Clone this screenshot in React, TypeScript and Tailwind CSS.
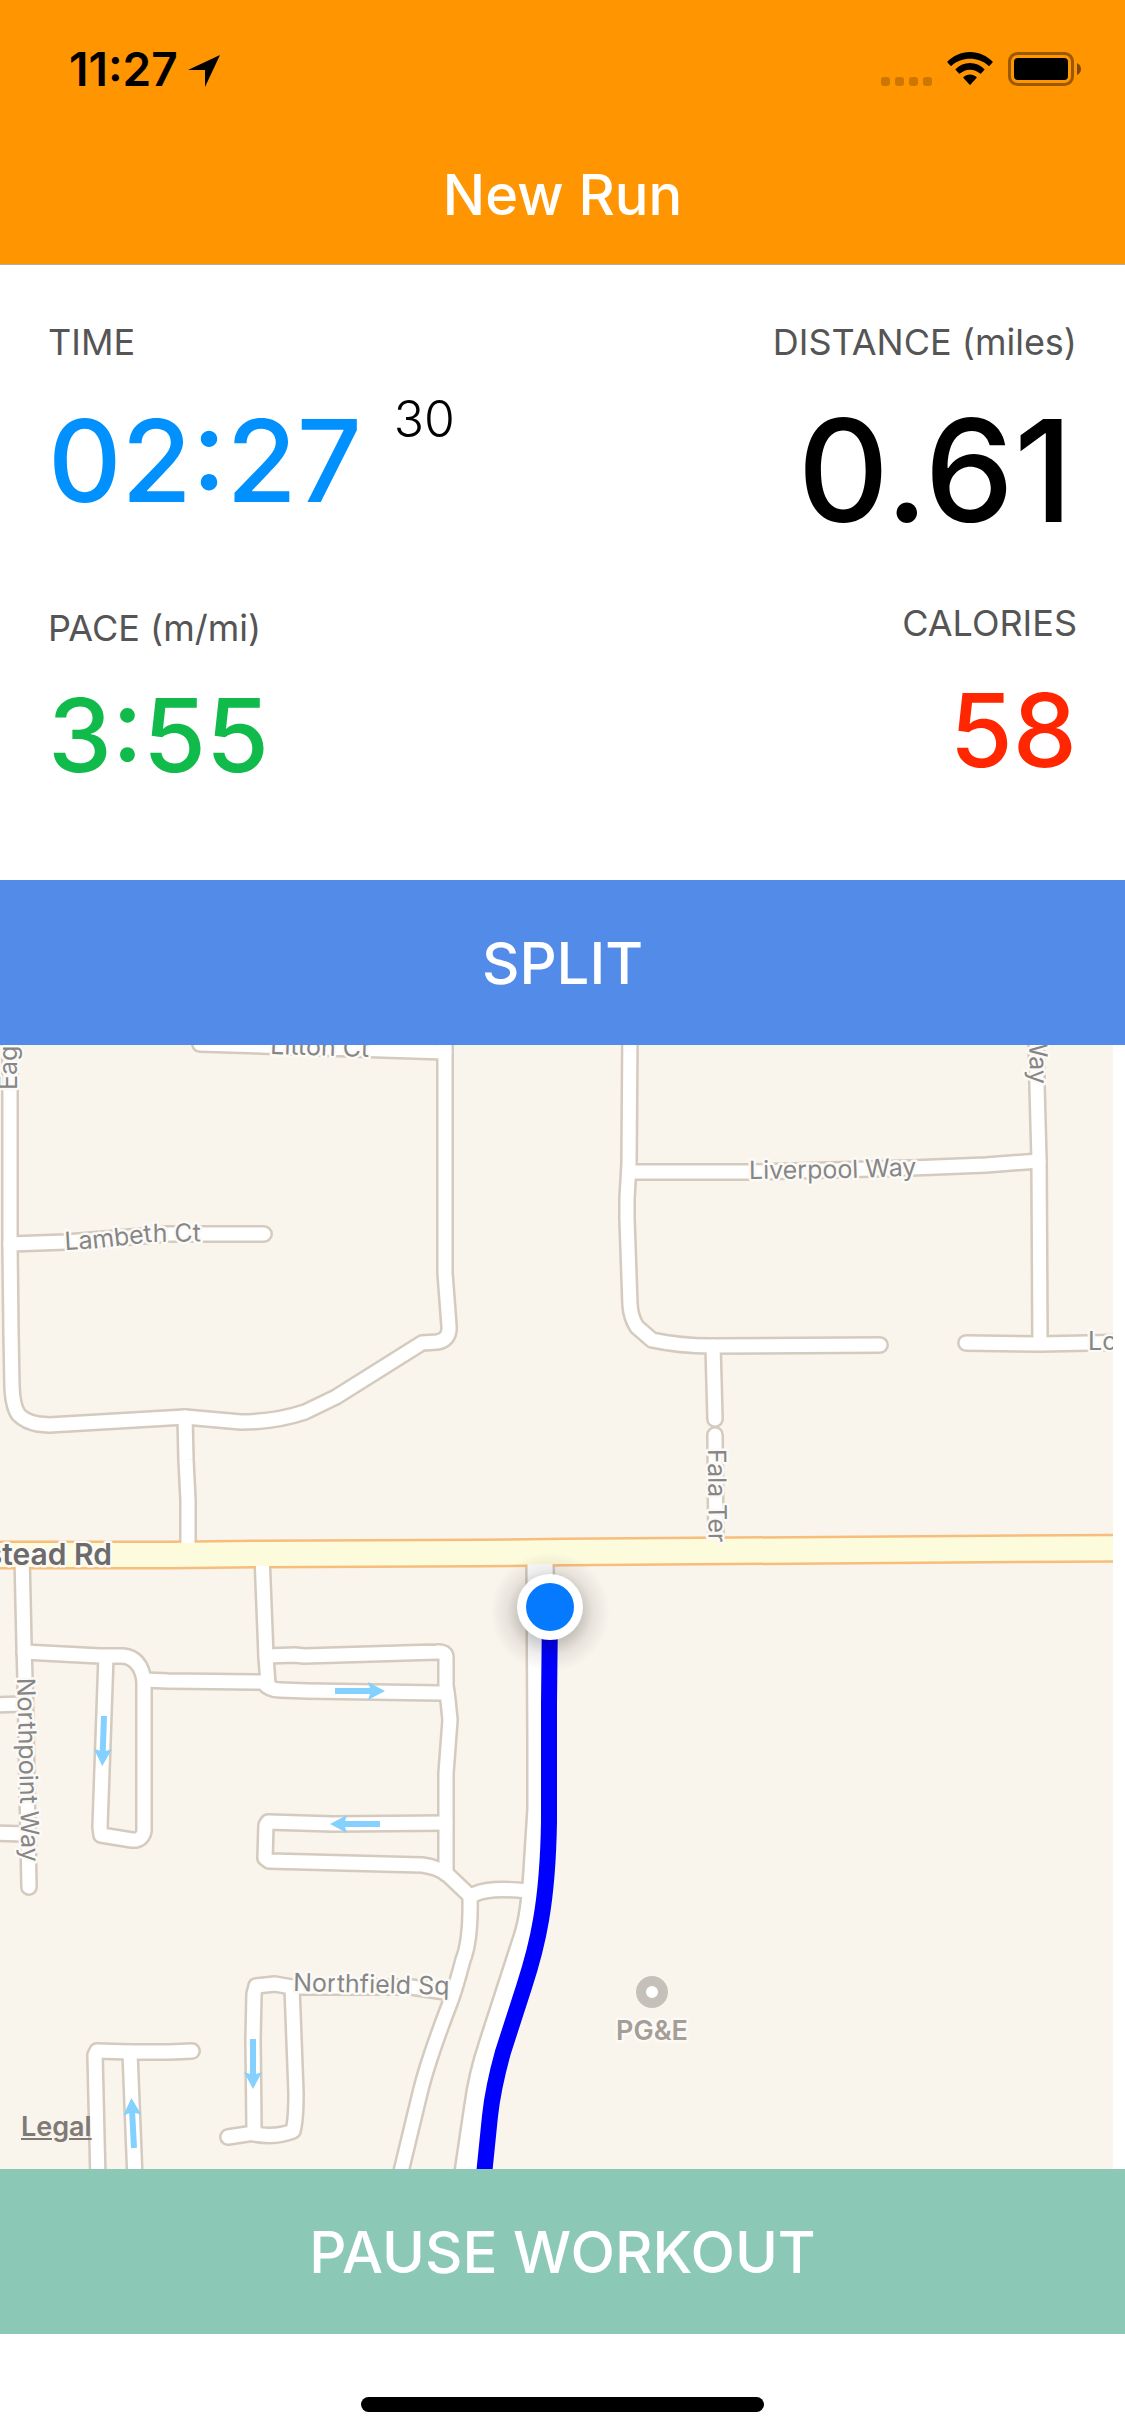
type Point = [number, number];

const minorRoads = [
  "M10,1030 L10,1245 L11,1333 L12,1387 Q13,1408 19,1415 Q26,1422 38,1424 L49,1425 L185,1417 L241,1422 Q275,1422 305,1412 L336,1397 L422,1343 L437,1342 Q450,1340 449,1326 L445,1273 L445,1030",
  "M200,1044 L445,1052",
  "M10,1244 L66,1242 L168,1234 L264,1234",
  "M185,1417 L186,1460 L188,1500 L188,1553",
  "M630,1030 L629,1164 L627,1198 L627,1219 L630,1305 Q631,1318 637,1327 L652,1340 Q680,1346 711,1346 L880,1345",
  "M629,1172 L750,1172 L911,1168 L986,1165 L1039,1161",
  "M1036,1030 L1037,1085 L1039,1160 L1040,1343",
  "M966,1343 L1040,1344 L1130,1342",
  "M713,1346 L715,1419",
  "M715,1435 L716,1548",
  "M22,1555 L24,1645 L25,1680 L29,1887",
  "M-10,1705 L22,1704",
  "M-10,1833 L24,1834",
  "M24,1652 L100,1656 L123,1656 Q141,1658 144,1681 L144,1831 Q142,1841 132,1840 L101,1835 L100,1827 L106,1656",
  "M144,1680 L168,1681 L263,1682 Q269,1690 280,1690 L307,1691 L440,1693 L447,1693",
  "M262,1555 L266,1657 L268,1684",
  "M266,1656 L295,1655 L304,1656 L437,1652 Q446,1651 446,1658 L446,1685 L448,1700 L450,1720 L446,1773 L446,1874",
  "M446,1823 L333,1824 L268,1822 L266,1825 L265,1858 L269,1861 L422,1865 Q438,1867 448,1875 L470,1896",
  "M470,1896 L475,1894 Q490,1887 528,1891",
  "M470,1896 Q471,1940 463,1960 Q455,1990 450,2003 Q428,2060 420,2093 L399,2180",
  "M228,2137 L254,2133 L254,2127 L253,2040 L254,1994 L256,1986 L275,1984 L292,1987 L411,1987 L452,1993",
  "M254,2134 Q276,2138 293,2131 Q296,2120 296,2093 L292,1987",
  "M98,2180 L95,2055 L97,2051 L130,2052 L170,2052 L192,2051",
  "M130,2052 L135,2180",
];

const trunkRoad =
  "M540,1555 L541,1740 L541,1809 L537,1872 Q534,1918 527,1938 L492,2046 Q482,2076 478,2106 L467,2180";

const highway = "M-20,1555 L170,1555 L260,1554 L480,1553 L565,1552 L1140,1548";

const route =
  "M550,1610 L549,1703 L549,1822 Q548,1880 541,1920 Q536,1950 524,1987 L503,2052 Q493,2088 490,2116 L483,2185";

const streetLabels = [
  { id: "litton", d: "M270,1054 L400,1058", text: "Litton Ct" },
  { id: "eagle", d: "M17,1090 L17,1000", text: "Eag" },
  { id: "lambeth", d: "M65,1250 L100,1248 L150,1242 L240,1241", text: "Lambeth Ct" },
  { id: "liverpool", d: "M749,1179 L850,1178 L960,1174", text: "Liverpool Way" },
  { id: "way", d: "M1029,1033 L1031,1140", text: "Way" },
  { id: "lo", d: "M1088,1350 L1160,1350", text: "Lo" },
  { id: "fala", d: "M708,1449 L709,1600", text: "Fala Ter" },
  { id: "northpoint", d: "M17,1678 L23,1910", text: "Northpoint Way" },
  { id: "northfield", d: "M293,1991 L380,1993 L500,1996", text: "Northfield Sq" },
];

const arrows: { at: Point; angle: number }[] = [
  { at: [335, 1691], angle: 0 },
  { at: [380, 1824], angle: 180 },
  { at: [104, 1716], angle: 92 },
  { at: [253, 2039], angle: 90 },
  { at: [134, 2148], angle: -93 },
];

function RouteMap() {
  return (
    <svg
      viewBox="0 1045 1113 1124"
      preserveAspectRatio="xMidYMid slice"
      className="absolute inset-0 h-full w-full"
      role="img"
      aria-label="Map of the current run"
    >
      <defs>
        <radialGradient id="dotShadow">
          <stop offset="50%" stopColor="#000" stopOpacity="0.2" />
          <stop offset="72%" stopColor="#000" stopOpacity="0.07" />
          <stop offset="100%" stopColor="#000" stopOpacity="0" />
        </radialGradient>
        {streetLabels.map((label) => (
          <path key={label.id} id={label.id} d={label.d} />
        ))}
      </defs>
      <rect x="-500" y="545" width="2113" height="2124" fill="#f9f4ec" />

      <g fill="none" strokeLinecap="round" strokeLinejoin="round">
        <g stroke="#d4cabe">
          {minorRoads.map((d) => (
            <path key={d} d={d} strokeWidth="18" />
          ))}
          <path d={trunkRoad} strokeWidth="30" strokeLinecap="butt" />
        </g>
        <path d={highway} stroke="#f7bd7c" strokeWidth="29" />
        <g stroke="#fff">
          {minorRoads.map((d) => (
            <path key={d} d={d} strokeWidth="13" />
          ))}
          <path d={trunkRoad} strokeWidth="25" strokeLinecap="butt" />
        </g>
        <path d={highway} stroke="#fcfbdb" strokeWidth="24" />
      </g>

      {arrows.map(({ at, angle }) => (
        <path
          key={at.join()}
          d="M0,-3 H35 L33,-9 L50,0 L33,9 L35,3 H0 Z"
          fill="#84d0ff"
          transform={`translate(${at[0]} ${at[1]}) rotate(${angle})`}
        />
      ))}

      <g
        fontSize="25"
        fill="#868686"
        stroke="#fcfaf6"
        strokeWidth="5"
        strokeLinejoin="round"
        paintOrder="stroke"
      >
        {streetLabels.map((label) => (
          <text key={label.id}>
            <textPath href={`#${label.id}`}>{label.text}</textPath>
          </text>
        ))}
        <text x="112" y="1565" fontSize="30" fontWeight="600" fill="#6b6b6b" textAnchor="end">
          stead Rd
        </text>
        <text x="652" y="2040" fontSize="27" fontWeight="600" fill="#a49e97" textAnchor="middle">
          PG&amp;E
        </text>
      </g>
      <circle cx="652" cy="1992" r="11" fill="#fff" stroke="#c5c1ba" strokeWidth="10" />

      <path d={route} fill="none" stroke="#0000ff" strokeWidth="16" />
      <circle cx="550" cy="1612" r="60" fill="url(#dotShadow)" />
      <circle cx="550" cy="1607" r="33" fill="#fff" />
      <circle cx="550" cy="1607" r="24" fill="#067aff" />
    </svg>
  );
}

function StatusBar() {
  return (
    <div className="flex h-[132px] items-center justify-between pt-[6px] pr-11 pl-[69px]">
      <div className="flex items-center gap-[10px]">
        <time className="text-[46px] leading-[54px] font-semibold text-black">11:27</time>
        <svg viewBox="0 0 32 32" className="mt-1 h-8 w-8" aria-hidden="true">
          <path d="M32,0 L17,32 L17,15 L0,15 Z" fill="#000" />
        </svg>
      </div>
      <div className="flex items-end gap-[15px]">
        <div className="flex gap-[5px]">
          {[0, 1, 2, 3].map((dot) => (
            <span key={dot} className="size-[9px] rounded-[3px] bg-black/20" />
          ))}
        </div>
        <svg viewBox="0 0 46 34" className="h-[34px] w-[46px]" aria-label="Wi-Fi">
          <path d="M23,0 C32,0 40,4 45.500,9.500 Q46,10 45.500,10.500 L42.500,13.700 Q42,14.200 41.500,13.700 C36,9 30,6.800 23,6.800 C16,6.800 10,9 4.500,13.700 Q4,14.200 3.500,13.700 L0.500,10.500 Q0,10 0.500,9.500 C6,4 14,0 23,0 Z" />
          <path d="M23,11 C28.500,11 33.500,13.300 37.300,17 Q37.800,17.500 37.300,18 L34,21.600 Q33.500,22.100 33,21.600 C30,19.200 27,17.800 23,17.800 C19,17.800 16,19.200 13,21.600 Q12.500,22.100 12,21.600 L8.700,18 Q8.200,17.500 8.700,17 C12.500,13.300 17.500,11 23,11 Z" />
          <path d="M23,22.500 C25.500,22.500 27.700,23.400 29.500,25 Q30,25.500 29.500,26 L23.600,32.600 Q23,33.200 22.400,32.600 L16.500,26 Q16,25.500 16.500,25 C18.300,23.400 20.500,22.500 23,22.500 Z" />
        </svg>
        <svg viewBox="0 0 73 34" className="h-[34px] w-[73px]" aria-label="Battery full">
          <rect x="1.500" y="1.500" width="63" height="31" rx="8" fill="none" stroke="#000" strokeOpacity="0.4" strokeWidth="3" />
          <rect x="6" y="6" width="54" height="22" rx="4" />
          <path d="M69,11 Q73,13 73,17 Q73,21 69,23 Z" fillOpacity="0.5" />
        </svg>
      </div>
    </div>
  );
}

const labelClass = "text-[36px] leading-[46px] text-[#555]";

export default function App() {
  return (
    <div className="flex min-h-screen flex-col bg-white font-['Inter',sans-serif]">
      <header className="border-b border-[#b2ada6] bg-[#ff9500]">
        <StatusBar />
        <h1 className="pt-[27px] pb-[33px] text-center text-[56px] leading-[72px] font-medium text-white">New Run</h1>
      </header>

      <main className="flex flex-1 flex-col">
        <dl className="flex justify-between px-12 pt-[54px] pb-[89px]">
          <div>
            <div>
              <dt className={labelClass}>TIME</dt>
              <dd className="mt-6 flex items-start gap-8">
                <span className="text-[114px] leading-[144px] font-medium text-[#0091ff]">02:27</span>
                <span className="text-[50px] leading-[60px] font-light text-black">30</span>
              </dd>
            </div>
            <div className="mt-[72px]">
              <dt className={labelClass}>PACE (m/mi)</dt>
              <dd className="mt-7 text-[102px] leading-[112px] font-medium text-[#11bb4b]">3:55</dd>
            </div>
          </div>
          <div className="text-right">
            <div>
              <dt className={labelClass}>DISTANCE (miles)</dt>
              <dd className="mt-[35px] pr-1 text-[142px] leading-[140px] font-medium text-black">0.61</dd>
            </div>
            <div className="mt-[60px]">
              <dt className={labelClass}>CALORIES</dt>
              <dd className="mt-7 text-[102px] leading-[112px] font-medium text-[#ff2600]">58</dd>
            </div>
          </div>
        </dl>

        <button type="button" className="h-[165px] bg-[#538be9] text-[58px] leading-[72px] font-medium text-white">
          SPLIT
        </button>

        <section className="relative mr-3 min-h-[480px] flex-1 overflow-hidden">
          <RouteMap />
          <a
            href="#legal"
            className="absolute bottom-[26px] left-[21px] text-[27px] leading-8 font-semibold text-[#7e7b77] underline decoration-2 underline-offset-2"
          >
            Legal
          </a>
        </section>

        <button type="button" className="h-[165px] bg-[#8bc9b6] text-[58px] leading-[72px] font-medium text-white">
          PAUSE WORKOUT
        </button>
      </main>

      <footer className="flex justify-center pt-[63px] pb-6">
        <div className="h-[15px] w-[403px] rounded-full bg-black" />
      </footer>
    </div>
  );
}
